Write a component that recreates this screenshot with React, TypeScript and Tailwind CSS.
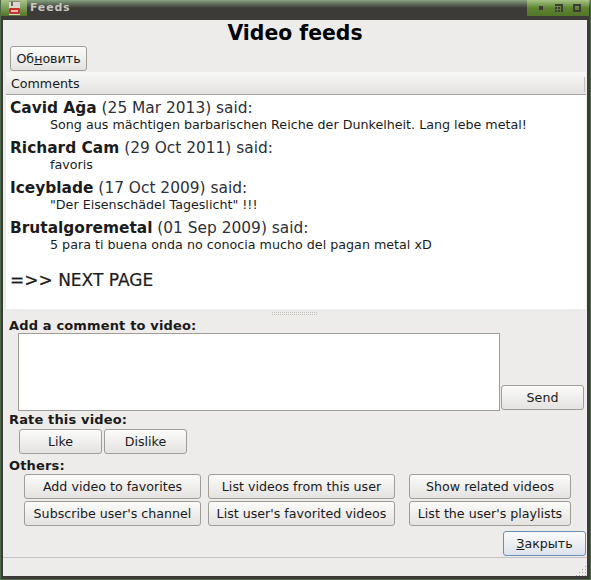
const FONT = "font-['DejaVu_Sans',sans-serif]";

const COMMENTS = [
  { name: "Cavid Ağa", date: "25 Mar 2013", text: "Song aus mächtigen barbarischen Reiche der Dunkelheit. Lang lebe metal!" },
  { name: "Richard Cam", date: "29 Oct 2011", text: "favoris" },
  { name: "Iceyblade", date: "17 Oct 2009", text: "\"Der Eisenschädel Tageslicht\" !!!" },
  { name: "Brutalgoremetal", date: "01 Sep 2009", text: "5 para ti buena onda no conocia mucho del pagan metal xD" },
];

function Btn({ className = "", focus = false, children }: { className?: string; focus?: boolean; children: React.ReactNode }) {
  return (
    <button className={`h-[25px] shrink-0 rounded-[3px] border bg-gradient-to-b from-[#fbfbfa] pt-[1px] text-[12.65px] leading-none text-[#1a1a1a] ${focus ? "border-[#6c8fb5] to-[#dde3ec]" : "border-[#a09d98] to-[#e4e3e1]"} ${className}`}>
      {children}
    </button>
  );
}

function WindowButtons() {
  return (
    <div className="flex h-[16px] w-[62px] items-center justify-between bg-gradient-to-b from-[#a9c486] via-[#5f8530] to-[#527527] pl-[10px] pr-[8px]">
      <svg width="8" height="8" viewBox="0 0 8 8">
        <rect x="2" y="2" width="4" height="4" fill="#3c3b37" />
      </svg>
      <svg width="8" height="8" viewBox="0 0 8 8">
        <path d="M0 0h8v8H6V2H0zM0 3h2v2H0zM3 3h2v2H3zM0 6h2v2H0zM3 6h2v2H3z" fill="#3c3b37" />
      </svg>
      <svg width="8" height="8" viewBox="0 0 8 8">
        <path d="M0 0h8v8H0zM2 2v4h4V2z" fill="#3c3b37" fillRule="evenodd" />
      </svg>
    </div>
  );
}

export default function App() {
  return (
    <div className={`${FONT} flex h-[580px] w-[591px] flex-col overflow-hidden border-x border-b border-x-[#4d6a4a] border-b-[#4d6a4a] bg-[#3c3b37]`}>
      {/* title bar */}
      <div className="relative flex h-[20px] shrink-0 items-start bg-[#3c3b37]">
        <div className="absolute inset-x-0 top-0 h-[8px] bg-gradient-to-b from-[#87a480] to-[#3c3b37]" />
        <div className="relative flex h-[16px] w-[26px] items-center justify-center bg-gradient-to-b from-[#a9c486] to-[#527527]">
          <svg width="13" height="14" viewBox="0 0 13 14">
            <rect x="1" y="0" width="11" height="14" fill="#d9d5cf" />
            <rect x="1" y="0" width="11" height="1" fill="#8a8680" />
            <rect x="3" y="1" width="2" height="4" fill="#6b6660" />
            <rect x="1" y="7" width="11" height="6" rx="1" fill="#c8302a" />
            <rect x="3" y="9" width="7" height="2" fill="#eeb9b2" />
          </svg>
        </div>
        <span className="relative ml-[3px] mt-[1px] text-[11px] leading-[14px] font-bold tracking-[0.8px] text-[#c9c8c0]">Feeds</span>
        <div className="relative ml-auto mr-[1px]">
          <WindowButtons />
        </div>
      </div>

      {/* client area */}
      <div className="ml-[2px] mr-[3px] flex min-h-0 flex-1 flex-col bg-[#edecea] text-[#1a1a1a]">
        <h1 className="h-[26px] pt-[1px] text-center text-[20.4px] leading-[24px] font-bold text-black">Video feeds</h1>

        <Btn className="ml-[7px] w-[77px]">
          Об<span className="underline">н</span>овить
        </Btn>

        {/* comments */}
        <div className="ml-[3px] mr-[1px] mt-[1px] flex h-[23px] items-center border-b border-[#a8a6a2] bg-gradient-to-b from-[#f8f8f7] to-[#e3e2e0] pl-[5px] pr-[1px] pt-[2px] text-[12.65px]">
          <span>Comments</span>
          <span className="ml-auto h-[15px] w-px bg-[#c0bfbc]" />
        </div>
        <div className="ml-[3px] mr-[1px] h-[214px] bg-white pl-[4px] pt-[3px]">
          {COMMENTS.map((c) => (
            <div key={c.name} className="h-[40px]">
              <p className="h-[19px] text-[15.4px] leading-[21px] text-[#2d3037]">
                <span className="font-bold text-[#1c1c1c]">{c.name}</span> ({c.date}) said:
              </p>
              <p className="pl-[40px] text-[12.7px] leading-[16px]">{c.text}</p>
            </div>
          ))}
          <p className="pt-[12px] text-[17px] leading-[21px] text-[#1c1c1c] [-webkit-text-stroke:0.2px_#1c1c1c]">=&gt;&gt; NEXT PAGE</p>
        </div>

        {/* splitter handle */}
        <div className="flex h-[10px] items-center justify-center">
          <svg width="46" height="4" viewBox="0 0 46 4">
            <defs>
              <pattern id="dots" width="2" height="2" patternUnits="userSpaceOnUse">
                <rect width="1" height="1" fill="#c4c2bd" />
              </pattern>
            </defs>
            <rect width="46" height="4" fill="url(#dots)" />
          </svg>
        </div>

        <p className="ml-[6px] h-[13px] text-[13px] leading-[13px] font-bold tracking-[0.15px]">Add a comment to video:</p>
        <div className="mt-[1px] flex items-end">
          <div className="ml-[15px] h-[78px] w-[482px] border border-[#a09d98] bg-white" />
          <Btn className="ml-[1px] mb-[1px] w-[83px]">Send</Btn>
        </div>

        <p className="ml-[6px] mt-[1px] h-[17px] text-[13px] leading-[16px] font-bold tracking-[0.15px]">Rate this video:</p>
        <div className="ml-[16px] flex gap-[2px]">
          <Btn className="w-[83px]">Like</Btn>
          <Btn className="w-[83px]">Dislike</Btn>
        </div>

        <p className="ml-[6px] mt-[3px] h-[17px] text-[13px] leading-[17px] font-bold tracking-[0.15px]">Others:</p>
        <div className="ml-[21px] flex flex-col gap-[2px]">
          <div className="flex">
            <Btn className="w-[177px]">Add video to favorites</Btn>
            <Btn className="ml-[7px] w-[187px]">List videos from this user</Btn>
            <Btn className="ml-[14px] w-[162px]">Show related videos</Btn>
          </div>
          <div className="flex">
            <Btn className="w-[177px]">Subscribe user's channel</Btn>
            <Btn className="ml-[7px] w-[187px]">List user's favorited videos</Btn>
            <Btn className="ml-[14px] w-[162px]">List the user's playlists</Btn>
          </div>
        </div>

        <div className="mt-[5px] flex justify-end pr-[1px]">
          <Btn focus className="w-[83px]">
            <span className="underline">З</span>акрыть
          </Btn>
        </div>

        {/* status bar */}
        <div className="mt-[1px] flex min-h-0 flex-1 items-end justify-end border-t border-[#c4c3bf]">
          <svg width="11" height="11" viewBox="0 0 11 11" fill="#a5a39e">
            <path d="M9 1h1v1H9zM6 4h1v1H6zM9 4h1v1H9zM3 7h1v1H3zM6 7h1v1H6zM9 7h1v1H9zM0 10h1v1H0zM3 10h1v1H3zM6 10h1v1H6zM9 10h1v1H9z" />
          </svg>
        </div>
      </div>
      <div className="h-[3px] shrink-0" />
    </div>
  );
}
